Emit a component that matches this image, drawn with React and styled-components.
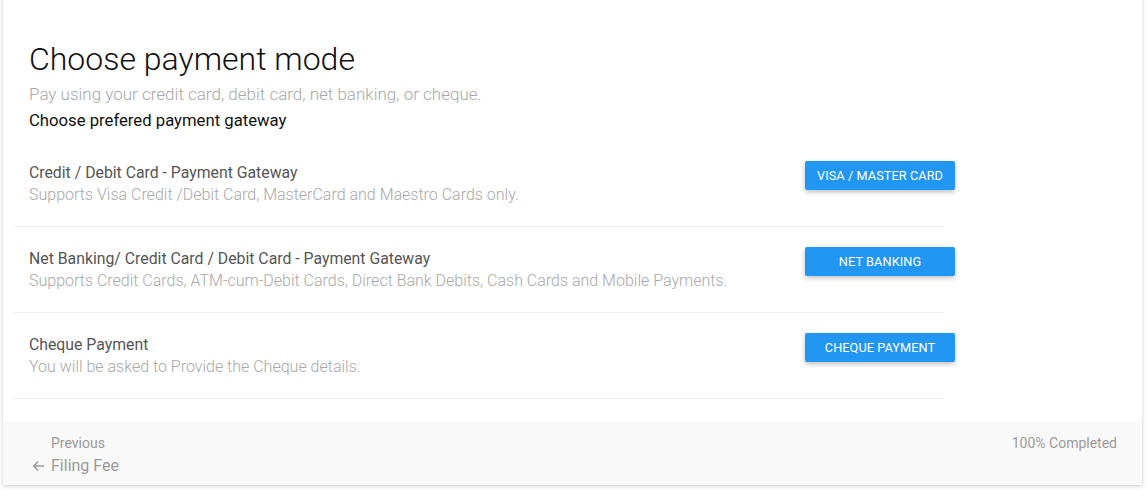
import React from "react";
import styled, { createGlobalStyle } from "styled-components";

const Global = createGlobalStyle`
  html, body { margin: 0; padding: 0; background: #fff; }
  body { font-family: Roboto, "Noto Sans", Arial, sans-serif; overflow: hidden; }
  * { box-sizing: border-box; }
`;

const Page = styled.div`
  padding: 0 6px 5px 3px;
`;

const Card = styled.div`
  margin-top: -10px;
  background: #fff;
  box-shadow: 0 1px 4px rgba(0, 0, 0, 0.22);
`;

const Body = styled.div`
  padding: 51px 0 23px 11px;
`;

const Header = styled.div`
  padding-left: 15px;
  margin-bottom: 8px;
`;

const Title = styled.h1`
  margin: 0;
  font-weight: 300;
  font-size: 32px;
  line-height: 36px;
  color: #111;
`;

const Subtitle = styled.p`
  margin: 5px 0 0;
  font-weight: 300;
  font-size: 17px;
  line-height: 24px;
  color: #a8a8a8;
`;

const Prompt = styled.p`
  margin: 3px 0 0;
  font-weight: 400;
  font-size: 16.7px;
  line-height: 24px;
  color: #111;
`;

const List = styled.div`
  width: 930px;
`;

const Row = styled.div`
  display: flex;
  align-items: flex-start;
  justify-content: space-between;
  height: 86px;
  padding: 20px 0 0 15px;
  border-bottom: 1px solid #eeeeee;
`;

const Info = styled.div`
  padding-top: 1px;
`;

const RowTitle = styled.div`
  font-size: 15.8px;
  line-height: 22px;
  color: #555;
`;

const RowDesc = styled.div`
  font-size: 16px;
  line-height: 22px;
  color: #a8a8a8;
  font-weight: 300;
`;

const ActionButton = styled.button`
  width: 150px;
  height: 29px;
  margin-right: -11px;
  border: none;
  border-radius: 2px;
  background: #2196f3;
  color: #fff;
  font-family: Roboto, Arial, sans-serif;
  font-size: 12.7px;
  font-weight: 400;
  text-transform: uppercase;
  letter-spacing: 0.1px;
  box-shadow: 0 2px 5px rgba(0, 0, 0, 0.26);
  cursor: pointer;
`;

const Footer = styled.div`
  display: flex;
  justify-content: space-between;
  background: #f9f9f9;
  height: 63px;
  padding: 13px 25px 0 27px;
`;

const Nav = styled.div`
  display: flex;
  flex-direction: column;
`;

const NavLabel = styled.span`
  padding-left: 21px;
  font-size: 14px;
  line-height: 16px;
  color: #9a9a9a;
`;

const NavLink = styled.a`
  display: flex;
  align-items: center;
  gap: 3px;
  margin-top: 6px;
  font-size: 16px;
  line-height: 18px;
  color: #9a9a9a;
  text-decoration: none;
`;

const Progress = styled.span`
  font-size: 14px;
  line-height: 16px;
  color: #9a9a9a;
`;

const options = [
  {
    title: "Credit / Debit Card - Payment Gateway",
    desc: "Supports Visa Credit /Debit Card, MasterCard and Maestro Cards only.",
    action: "Visa / Master Card",
  },
  {
    title: "Net Banking/ Credit Card / Debit Card - Payment Gateway",
    desc: "Supports Credit Cards, ATM-cum-Debit Cards, Direct Bank Debits, Cash Cards and Mobile Payments.",
    action: "Net Banking",
  },
  {
    title: "Cheque Payment",
    desc: "You will be asked to Provide the Cheque details.",
    action: "Cheque Payment",
  },
];

const Arrow = () => (
  <svg width="18" height="18" viewBox="0 0 24 24" fill="none" stroke="#9a9a9a" strokeWidth="2">
    <path d="M19 12H6M11 6l-6 6 6 6" />
  </svg>
);

export default function App() {
  return (
    <Page>
      <Global />
      <Card>
        <Body>
          <Header>
            <Title>Choose payment mode</Title>
            <Subtitle>Pay using your credit card, debit card, net banking, or cheque.</Subtitle>
            <Prompt>Choose prefered payment gateway</Prompt>
          </Header>
          <List>
            {options.map((o) => (
              <Row key={o.title}>
                <Info>
                  <RowTitle>{o.title}</RowTitle>
                  <RowDesc>{o.desc}</RowDesc>
                </Info>
                <ActionButton>{o.action}</ActionButton>
              </Row>
            ))}
          </List>
        </Body>
        <Footer>
          <Nav>
            <NavLabel>Previous</NavLabel>
            <NavLink href="#">
              <Arrow />
              Filing Fee
            </NavLink>
          </Nav>
          <Progress>100% Completed</Progress>
        </Footer>
      </Card>
    </Page>
  );
}
